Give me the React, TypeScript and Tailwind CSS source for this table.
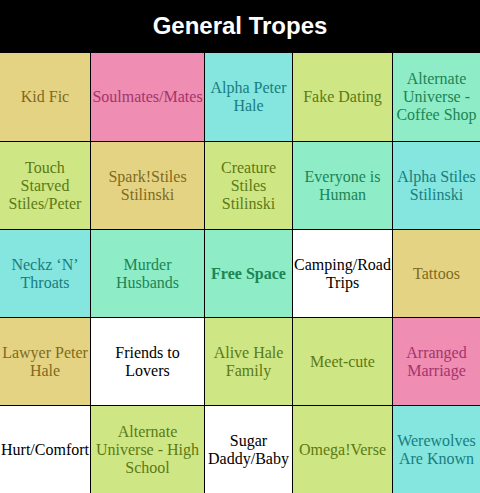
import React from 'react';

type Tone = 'yellow' | 'pink' | 'cyan' | 'lime' | 'mint' | 'white';

const toneClass: Record<Tone, string> = {
  yellow: 'bg-[#e5d384] text-[#7f6a20]',
  pink: 'bg-[#ef8db2] text-[#a3356c]',
  cyan: 'bg-[#84e6de] text-[#197d80]',
  lime: 'bg-[#cfe684] text-[#5b7a14]',
  mint: 'bg-[#8eecc6] text-[#1b8555]',
  white: 'bg-white text-black',
};

const cells: { text: string; tone: Tone; bold?: boolean }[] = [
  { text: 'Kid Fic', tone: 'yellow' },
  { text: 'Soulmates/Mates', tone: 'pink' },
  { text: 'Alpha Peter Hale', tone: 'cyan' },
  { text: 'Fake Dating', tone: 'lime' },
  { text: 'Alternate Universe - Coffee Shop', tone: 'mint' },
  { text: 'Touch Starved Stiles/Peter', tone: 'lime' },
  { text: 'Spark!Stiles Stilinski', tone: 'yellow' },
  { text: 'Creature Stiles Stilinski', tone: 'lime' },
  { text: 'Everyone is Human', tone: 'mint' },
  { text: 'Alpha Stiles Stilinski', tone: 'cyan' },
  { text: 'Neckz \u2018N\u2019 Throats', tone: 'cyan' },
  { text: 'Murder Husbands', tone: 'mint' },
  { text: 'Free Space', tone: 'mint', bold: true },
  { text: 'Camping/Road Trips', tone: 'white' },
  { text: 'Tattoos', tone: 'yellow' },
  { text: 'Lawyer Peter Hale', tone: 'yellow' },
  { text: 'Friends to Lovers', tone: 'white' },
  { text: 'Alive Hale Family', tone: 'lime' },
  { text: 'Meet-cute', tone: 'lime' },
  { text: 'Arranged Marriage', tone: 'pink' },
  { text: 'Hurt/Comfort', tone: 'white' },
  { text: 'Alternate Universe - High School', tone: 'lime' },
  { text: 'Sugar Daddy/Baby', tone: 'white' },
  { text: 'Omega!Verse', tone: 'lime' },
  { text: 'Werewolves Are Known', tone: 'cyan' },
];

export default function App() {
  return (
    <div className="w-[480px] h-[493px] bg-black flex flex-col">
      <div className="h-[53px] flex items-center justify-center">
        <h1 className="text-white text-[24px] font-bold font-['Liberation_Sans',Arial,sans-serif] -mt-px">
          General Tropes
        </h1>
      </div>
      <div className="grid grid-cols-[90px_113px_87px_99px_87px] grid-rows-[88px_87px_87px_87px_87px] gap-px bg-black">
        {cells.map((c, i) => (
          <div
            key={i}
            className={`flex items-center justify-center text-center px-px font-['Liberation_Serif','Times_New_Roman',serif] text-[16px] leading-[18px] ${toneClass[c.tone]} ${c.bold ? 'font-bold' : ''}`}
          >
            {c.text}
          </div>
        ))}
      </div>
    </div>
  );
}
